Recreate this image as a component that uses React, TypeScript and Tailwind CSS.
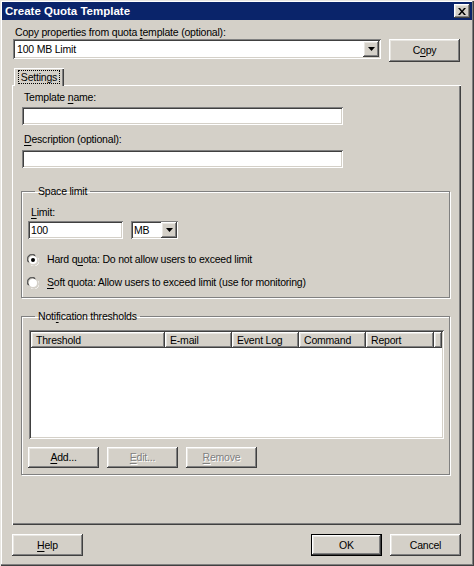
import type { ReactNode } from "react";

const raised =
  "bg-[#d4d0c8] shadow-[inset_-1px_-1px_0_#404040,inset_1px_1px_0_#ffffff,inset_-2px_-2px_0_#808080,inset_2px_2px_0_#e8e6e1]";
const sunken =
  "bg-white shadow-[inset_1px_1px_0_#808080,inset_-1px_-1px_0_#ffffff,inset_2px_2px_0_#404040,inset_-2px_-2px_0_#d4d0c8]";

function U({ children }: { children: ReactNode }) {
  return <span className="underline underline-offset-[2px]">{children}</span>;
}

function Button({
  children,
  disabled,
  isDefault,
  className = "",
}: {
  children: ReactNode;
  disabled?: boolean;
  isDefault?: boolean;
  className?: string;
}) {
  return (
    <div
      className={`flex items-center justify-center ${className} ${
        isDefault ? "border border-black" : ""
      }`}
    >
      <div
        className={`w-full h-full flex items-center justify-center ${raised} ${
          disabled ? "text-[#808080] [text-shadow:1px_1px_0_#ffffff]" : "text-black"
        }`}
      >
        {children}
      </div>
    </div>
  );
}

function DropArrow() {
  return (
    <div className={`w-[16px] h-[16px] flex items-center justify-center ${raised}`}>
      <svg width="7" height="4" viewBox="0 0 7 4">
        <path d="M0 0h7L3.5 4z" fill="#000" />
      </svg>
    </div>
  );
}

function Radio({ checked }: { checked?: boolean }) {
  return (
    <svg width="12" height="12" viewBox="0 0 12 12" className="shrink-0">
      <path d="M1 8A5 5 0 0 1 8 1" stroke="#808080" fill="none" />
      <path d="M2 8.5A4 4 0 0 1 8.5 2" stroke="#404040" fill="none" />
      <circle cx="6" cy="6" r="4" fill="#fff" />
      <path d="M4 11A5 5 0 0 0 11 4" stroke="#fff" fill="none" />
      <path d="M3.5 10A4 4 0 0 0 10 3.5" stroke="#d4d0c8" fill="none" />
      {checked && <circle cx="6" cy="6" r="2" fill="#000" />}
    </svg>
  );
}

const columns = [
  { label: "Threshold", w: "w-[134px]" },
  { label: "E-mail", w: "w-[67px]" },
  { label: "Event Log", w: "w-[67px]" },
  { label: "Command", w: "w-[67px]" },
  { label: "Report", w: "w-[68px]" },
];

export default function App() {
  return (
    <div
      className="w-[474px] h-[566px] bg-[#d4d0c8] flex flex-col text-[10.5px] tracking-[-0.2px] leading-[13px] text-black shadow-[inset_1px_1px_0_#e8e6e1,inset_-1px_-1px_0_#404040,inset_-2px_-2px_0_#808080,inset_2px_2px_0_#ffffff]"
      style={{ fontFamily: '"Liberation Sans", Arial, sans-serif' }}
    >
      {/* Title bar */}
      <div className="mt-[2px] mx-[2px] h-[18px] bg-[#0a246a] flex items-center justify-between pl-[3px] pr-[2px]">
        <span className="text-white font-bold text-[11.5px] tracking-normal">Create Quota Template</span>
        <div className={`w-[16px] h-[14px] flex items-center justify-center ${raised}`}>
          <svg width="8" height="7" viewBox="0 0 8 7">
            <path d="M0 0h2l2 2.5L6 0h2L5 3.5 8 7H6L4 4.5 2 7H0l3-3.5z" fill="#000" />
          </svg>
        </div>
      </div>

      <div className="pl-[12px] flex flex-col">
        <div className="mt-[6px] pl-[3px] h-[13px]">
          Copy properties from quota <U>t</U>emplate (optional):
        </div>
        <div className="flex items-start gap-[8px] ml-[1px]">
          <div className={`w-[368px] h-[20px] flex items-center justify-between pl-[4px] pr-[2px] ${sunken}`}>
            <span>100 MB Limit</span>
            <DropArrow />
          </div>
          <Button className="w-[71px] h-[23px]">
            C<U>o</U>py
          </Button>
        </div>

        {/* Tab */}
        <div className="mt-[6px] ml-[2px] relative z-10 -mb-[1px] w-[50px] h-[18px] bg-[#d4d0c8] shadow-[inset_1px_1px_0_#ffffff,inset_-1px_0_0_#404040,inset_-2px_0_0_#808080] flex items-center justify-center">
          <span className="border border-dotted border-black px-[2px] leading-[12px]">Settings</span>
        </div>

        {/* Tab panel */}
        <div className="w-[449px] h-[440px] flex flex-col shadow-[inset_1px_1px_0_#ffffff,inset_-1px_-1px_0_#404040,inset_-2px_-2px_0_#808080]">
          <div className="mt-[6px] ml-[12px] h-[13px]">
            Template <U>n</U>ame:
          </div>
          <div className={`mt-[3px] ml-[10px] w-[321px] h-[18px] ${sunken}`} />
          <div className="mt-[8px] ml-[12px] h-[13px]">
            <U>D</U>escription (optional):
          </div>
          <div className={`mt-[4px] ml-[10px] w-[321px] h-[18px] ${sunken}`} />

          {/* Space limit */}
          <fieldset className="mt-[17px] ml-[9px] w-[429px] border border-[#808080] shadow-[1px_1px_0_#ffffff,inset_1px_1px_0_#ffffff] pl-[6px] pb-[8px]">
            <legend className="ml-[7px] px-[3px] h-[13px]">Space limit</legend>
            <div className="mt-[8px] pl-[3px] h-[13px]">
              <U>L</U>imit:
            </div>
            <div className="mt-[2px] flex items-center gap-[8px]">
              <div className={`w-[95px] h-[18px] flex items-center pl-[3px] ${sunken}`}>100</div>
              <div className={`w-[47px] h-[18px] flex items-center justify-between pl-[3px] pr-[1px] ${sunken}`}>
                <span>MB</span>
                <DropArrow />
              </div>
            </div>
            <div className="mt-[14px] flex items-center gap-[8px] h-[13px] -ml-[1px]">
              <Radio checked />
              <span>
                Hard q<U>u</U>ota: Do not allow users to exceed limit
              </span>
            </div>
            <div className="mt-[10px] flex items-center gap-[8px] h-[13px] -ml-[1px]">
              <Radio />
              <span>
                <U>S</U>oft quota: Allow users to exceed limit (use for monitoring)
              </span>
            </div>
          </fieldset>

          {/* Notification thresholds */}
          <fieldset className="mt-[12px] ml-[9px] w-[429px] border border-[#808080] shadow-[1px_1px_0_#ffffff,inset_1px_1px_0_#ffffff] pl-[6px] pb-[6px]">
            <legend className="ml-[7px] px-[3px] h-[13px]">
              Noti<U>f</U>ication thresholds
            </legend>
            <div className={`mt-[7px] ml-[1px] w-[415px] h-[109px] p-[2px] ${sunken}`}>
              <div className="flex h-[16px]">
                {columns.map((c) => (
                  <div key={c.label} className={`${c.w} h-full flex items-center pl-[5px] ${raised}`}>
                    {c.label}
                  </div>
                ))}
                <div className={`flex-1 h-full ${raised}`} />
              </div>
            </div>
            <div className="mt-[8px] flex gap-[8px]">
              <Button className="w-[71px] h-[21px]">
                <U>A</U>dd...
              </Button>
              <Button className="w-[71px] h-[21px]" disabled>
                <U>E</U>dit...
              </Button>
              <Button className="w-[71px] h-[21px]" disabled>
                <U>R</U>emove
              </Button>
            </div>
          </fieldset>
        </div>

        {/* Bottom buttons */}
        <div className="mt-[9px] flex w-[449px]">
          <Button className="w-[71px] h-[22px]">
            <U>H</U>elp
          </Button>
          <div className="flex-1" />
          <Button className="w-[71px] h-[22px]" isDefault>
            OK
          </Button>
          <Button className="w-[71px] h-[22px] ml-[8px]">Cancel</Button>
        </div>
      </div>
    </div>
  );
}
